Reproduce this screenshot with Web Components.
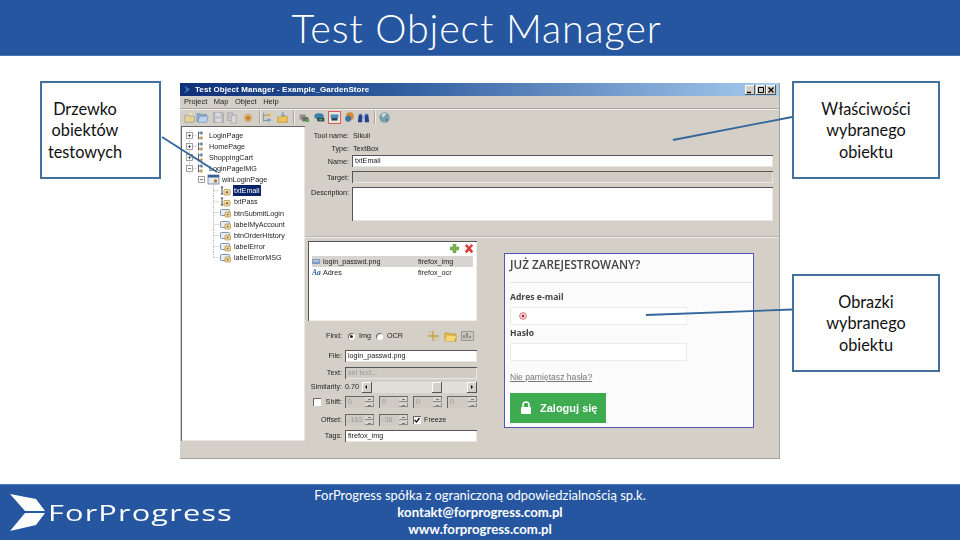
<!DOCTYPE html>
<html lang="pl"><head><meta charset="utf-8"><title>Test Object Manager</title>
<style>html,body{margin:0;padding:0;background:#fff}</style></head>
<body><fp-slide></fp-slide>
<script>
const UI='"Liberation Sans",Arial,sans-serif', SL='Lato,"Open Sans",sans-serif';
function def(name,css,html,init){
  customElements.define(name,class extends HTMLElement{
    connectedCallback(){
      if(this.shadowRoot)return;
      const r=this.attachShadow({mode:'open'});
      r.innerHTML='<style>'+css+'</style>'+(typeof html==='function'?html(this):html);
      if(init)init(this,r);
    }
  });
}
const ICONS={
 newp:'<path d="M1 5h4l1 1h6v7H1z" fill="#e8d48a" stroke="#8a9ab0" stroke-width=".8"/><path d="M7 1l1 2 2-1-1 2 2 1H7z" fill="#f4e9a0"/>',
 open:'<path d="M1 3h4l1 1h6v2H4l-2 6H1z" fill="#8fb2dc" stroke="#6b85a8" stroke-width=".7"/><path d="M4 6h10l-2 7H2z" fill="#bcd2ee" stroke="#6b85a8" stroke-width=".7"/>',
 save:'<path d="M2 2h10l1 1v10H2z" fill="#c2c2c8" stroke="#8e8e98" stroke-width=".8"/><path d="M4 2h6v4H4zM4 9h7v4H4z" fill="#dcdce0"/>',
 copy:'<path d="M2 2h6v9H2z" fill="#c8c8c8" stroke="#999" stroke-width=".7"/><path d="M6 5h6v9H6z" fill="#d8d8d8" stroke="#999" stroke-width=".7"/>',
 gear:'<circle cx="7" cy="8" r="4.4" fill="#dba24e" stroke="#c8b8a0" stroke-width="1.4" stroke-dasharray="2 1"/><circle cx="7" cy="8" r="1.5" fill="#c0563a"/>',
 tree:'<path d="M3 2v10M3 5h5M3 11h5" stroke="#7c8a94" fill="none"/><path d="M7 3h4v3H7z" fill="#e0b040"/><path d="M7 9h4v3H7z" fill="#6aa0d0"/>',
 fold:'<path d="M2 7h4l1-1h6v7H2z" fill="#edc35b" stroke="#b58a2a" stroke-width=".7"/><path d="M8 1v5M6 4l2 2 2-2" stroke="#4d87c7" fill="none"/>',
 blob1:'<path d="M2 4h7v6H2z" fill="#8f8f8f"/><path d="M5 7h7v5H5z" fill="#6b6b6b"/><circle cx="11" cy="11" r="2" fill="#57a04a"/>',
 blob2:'<ellipse cx="7" cy="6" rx="5.5" ry="3.4" fill="#3f7fa5"/><path d="M5 8h8v4H5z" fill="#1f3b52"/><path d="M7 9h4v2H7z" fill="#5cae4e"/>',
 blob3:'<path d="M.5 .5h14v14H.5z" fill="#e9e6e0" stroke="#d63c3c"/><path d="M3 4h9v4H3z" fill="#4c8ab5"/><path d="M4 8h7v3H4z" fill="#25465f"/>',
 blob4:'<circle cx="8" cy="6" r="4.5" fill="#cf8a3c"/><circle cx="6" cy="9" r="3.5" fill="#3d74a4"/>',
 bino:'<path d="M2 4h4v9H1zM9 4h4l1 9H9z" fill="#27408b"/><path d="M6 6h3v3H6z" fill="#8ea6d0"/><path d="M3 3h2v2H3zM10 3h2v2h-2z" fill="#5a78c0"/>',
 globe:'<circle cx="7.5" cy="7.5" r="6" fill="#79a0ab"/><path d="M4 4c2-2 5-2 6 0-2 0-2 3-5 3z" fill="#c7dde0"/><path d="M9 9l3 1-2 3z" fill="#4f7786"/>',
 plus:'<path d="M4 0h4v4h4v4H8v4H4V8H0V4h4z" fill="#7cb34e" stroke="#5c8f36" stroke-width=".6"/>',
 del:'<path d="M1 2l2-2 3 3 3-3 2 2-3 3 3 4-2 2-3-3-3 3-2-2 3-4z" fill="#e03c3c"/>',
 cut:'<path d="M1 6h11M6 1v10" stroke="#caa24a" stroke-width="1.5"/><path d="M2 2h3v3H2zM8 7h3v3H8z" fill="#e9dfc0" stroke="#b8a78a" stroke-width=".6"/>',
 folder2:'<path d="M1 3h4l1 1h6v7H1z" fill="#e7bc4a" stroke="#b88a28" stroke-width=".7"/><path d="M3 6h9l-2 5H1z" fill="#f4d878"/>',
 chart:'<path d="M.5 1.5h12v9H.5z" fill="#c8c6c0" stroke="#9a988f"/><path d="M3 8V5M6 8V3M9 8V6" stroke="#6d6d6d" stroke-width="1.2"/>'
};
const ic=(n,w=15,h=15,vb='0 0 15 15')=>`<svg width="${w}" height="${h}" viewBox="${vb}" style="display:block;flex:none">${ICONS[n]}</svg>`;

def('slide-header',`:host{display:flex;height:56px;background:#25569f;align-items:center;justify-content:center;box-sizing:border-box;border-bottom:1px solid #4a77b4;padding-right:7px}
h1{margin:0;font:300 39.5px/1 ${SL};color:#fff;letter-spacing:.85px}`,'<h1><slot></slot></h1>');

def('call-out',`:host{display:flex;align-items:center;justify-content:center;box-sizing:border-box;height:98px;border:2px solid #41719c;background:#fff;text-align:center;font:400 16.3px/21.6px ${SL};color:#111}`,'<div><slot></slot></div>');

def('fp-logo',`:host{display:flex;align-items:center;gap:2px;color:#fff}
span{font:400 21.5px/1 "Open Sans",sans-serif;letter-spacing:.8px;display:inline-block;transform-origin:left center;transform:scaleX(1.43)}`,
`<svg width="36" height="37" viewBox="0 0 36 37" style="display:block"><path d="M0 0L26 5L35 17H15Z" fill="#fff"/><path d="M15 19H35L26 31L0 37Z" fill="#fff"/></svg><span>ForProgress</span>`);

def('slide-footer',`:host{display:flex;height:56px;background:#25569f;box-sizing:border-box;border-top:1px solid #4f7cb8;position:relative;color:#fff;padding-left:10px;align-items:center}
.t{position:absolute;left:0;right:0;top:2px;text-align:center;font:400 12.95px/17px ${SL}}
b{font-weight:700;font-size:13.2px}`,
`<fp-logo></fp-logo><div class="t"><div>ForProgress spółka z ograniczoną odpowiedzialnością sp.k.</div><div><b>kontakt@forprogress.com.pl</b></div><div><b>www.forprogress.com.pl</b></div></div>`);

def('win-titlebar',`:host{display:flex;align-items:center;height:13px;background:linear-gradient(90deg,#0f2f78 0,#2c5a9c 35%,#a8ccf0 100%);color:#fff;padding-left:4px;padding-right:3px;font:700 8px/13px ${UI};letter-spacing:.08px}
.g{width:6px;height:8px;margin-right:5px;background:#3f76c6;clip-path:polygon(0 0,100% 50%,0 100%,40% 50%)}
.s{flex:1;white-space:nowrap}
.b{display:flex;gap:.5px}
.b i{display:block;width:10px;height:10px;background:#d4d0c8;box-shadow:inset -1px -1px #555,inset 1px 1px #fff;position:relative}
svg{display:block}`,
`<span class="g"></span><span class="s"><slot></slot></span><span class="b">
<i><svg width="10" height="10"><path d="M2 7.500h4" stroke="#000" stroke-width="1.500"/></svg></i>
<i><svg width="10" height="10"><path d="M2.500 2.500h5v5h-5z" fill="none" stroke="#000"/></svg></i>
<i><svg width="10" height="10"><path d="M2.500 2.500l5 5M7.500 2.500l-5 5" stroke="#000" stroke-width="1.300"/></svg></i></span>`);

def('win-menu',`:host{display:flex;box-sizing:border-box;height:13px;align-items:center;padding-left:4px;gap:6.5px;font:400 7.5px/12px ${UI};color:#222;border-bottom:1px solid #aaa79f;box-shadow:0 1px #f2f0ea}`,'<slot></slot>');

def('win-toolbar',`:host{display:flex;height:16px;align-items:center;padding-left:3px;gap:0}
.sl{display:flex;justify-content:center;width:15px;flex:none}
.sp{width:1px;height:14px;background:#a8a59d;box-shadow:1px 0 #f0eee8;flex:none}`,
()=>{
 const it=[['newp',3],['open',-2],['save',1],['copy',-1],['gear',1],0,['tree',0],['fold',0],0,['blob1',3],['blob2',0],['blob3',0],['blob4',0],['bino',0],0,['globe',3]];
 const gaps=[0,-3,1,-1,1,3,0,0,3,3,0,0,0,-1,3,2];
 return it.map((x,i)=>x===0?`<span class="sp" style="margin-left:${gaps[i]}px"></span>`:`<span class="sl" style="margin-left:${gaps[i]}px">${ic(x[0],13,13)}</span>`).join('');
});

def('tree-row',`:host{display:flex;height:11.15px;align-items:center;font:400 7.2px/11px ${UI};color:#222;white-space:nowrap}
svg{display:block;flex:none;overflow:visible}
.t{padding:0 1px;margin-left:0;line-height:11px}
:host([sel]) .t{background:#0a246a;color:#fff}`,
(h)=>{
 const lv=+h.getAttribute('level'),e=h.getAttribute('exp'),ico=h.getAttribute('icon'),last=h.hasAttribute('last');
 const cy=5.6;
 const box=(x,m)=>`<rect x="${x-3}" y="${cy-3}" width="6" height="6" fill="#fff" stroke="#8b8b8b" stroke-width=".8"/><path d="M${x-1.6} ${cy}h3.200${m==='+'?`M${x} ${cy-1.6}v3.200`:''}" stroke="#333" stroke-width=".7"/>`;
 let s='',w=27;
 if(lv===0){
  s+=`<path d="M8.500 0V11.150" stroke="#aaa" stroke-width=".7" stroke-dasharray="1 1"/>`+box(8.5,e)+`<path d="M12 ${cy}h4" stroke="#999" stroke-width=".7" stroke-dasharray="1 1"/>`;
  s+=`<path d="M17.500 1.500v8M17.500 3h3M17.500 8h3" stroke="#555" fill="none" stroke-width=".9"/><rect x="19.500" y="1.500" width="2" height="3" fill="#4a7ca8"/><rect x="19.500" y="6.500" width="2" height="3" fill="#c98f3a"/>`;
 } else if(lv===1){
  w=40;
  s+=box(20.500,'-')+`<rect x="27" y="1" width="11" height="9" fill="#e7ecf4" stroke="#6a7c96" stroke-width=".8"/><rect x="27" y="1" width="11" height="2.500" fill="#3d5f92"/><circle cx="34.500" cy="7" r="1.800" fill="#ad7b33"/>`;
 } else {
  w=52;
  s+=`<path d="M32.500 ${e==='first'?-2:0}V${last?cy:11.150}M32.500 ${cy}h6" stroke="#999" stroke-width=".7" stroke-dasharray="1 1"/>`;
  if(ico==='txt') s+=`<path d="M41 2v7M39.800 2h2.400M39.800 9h2.400" stroke="#222" stroke-width=".8" fill="none"/><rect x="43" y="4.500" width="6" height="5.500" rx="1" fill="#f2e5b8" stroke="#a8822e" stroke-width=".7"/><circle cx="46" cy="7.300" r="1.200" fill="#9a6a1f"/>`;
  else s+=`<rect x="39.500" y="2.500" width="9" height="6" rx="1" fill="#e8eef5" stroke="#617a95" stroke-width=".8"/><rect x="44" y="5" width="5.500" height="5" rx="1" fill="#eeddb0" stroke="#a8822e" stroke-width=".7"/><circle cx="46.700" cy="7.500" r="1" fill="#9a6a1f"/>`;
 }
 return `<svg width="${w}" height="11.150" viewBox="0 0 ${w} 11.150">${s}</svg><span class="t"><slot></slot></span>`;
});

def('tree-panel',`:host{display:block;width:124px;height:315px;margin-left:1px;background:#fff;box-sizing:border-box;padding-top:3.5px;box-shadow:inset 1px 1px #666,inset -1px -1px #e8e6e0}`,
`<tree-row level="0" exp="+">LoginPage</tree-row>
<tree-row level="0" exp="+">HomePage</tree-row>
<tree-row level="0" exp="+">ShoppingCart</tree-row>
<tree-row level="0" exp="-">LoginPageIMG</tree-row>
<tree-row level="1" exp="-">winLoginPage</tree-row>
<tree-row level="2" exp="first" icon="txt" sel>txtEmail</tree-row>
<tree-row level="2" icon="txt">txtPass</tree-row>
<tree-row level="2" icon="btn">btnSubmitLogin</tree-row>
<tree-row level="2" icon="btn">labelMyAccount</tree-row>
<tree-row level="2" icon="btn">btnOrderHistory</tree-row>
<tree-row level="2" icon="btn">labelError</tree-row>
<tree-row level="2" icon="btn" last>labelErrorMSG</tree-row>`);

def('win-input',`:host{display:flex;align-items:center;box-sizing:border-box;height:12px;background:#fff;box-shadow:inset 1px 1px #555,inset -1px -1px #e8e6e0;padding-left:3px;font:400 7.2px/12px ${UI};color:#222;white-space:nowrap;overflow:hidden}
:host([off]){background:#d0ccc4;color:#999}`,'<slot></slot>');

def('prop-grid',`:host{display:grid;grid-template-columns:44px 1fr;column-gap:3px;grid-template-rows:13px 13px 12px 12px 34px;align-content:start;row-gap:0;padding:3px 6px 0 0;font:400 7.2px/13px ${UI};color:#222;height:111px;box-sizing:border-box;border-bottom:1px solid #b8b5ad;box-shadow:0 1px #efede7}
.l{text-align:right;white-space:nowrap}
.v{padding-left:1px}
.a{margin-top:4px}`,
`<div class="l">Tool name:</div><div class="v">Sikuli</div>
<div class="l">Type:</div><div class="v">TextBox</div>
<div class="l">Name:</div><win-input>txtEmail</win-input>
<div class="l a">Target:</div><win-input class="a" off></win-input>
<div class="l" style="margin-top:8px;line-height:11px">Description:</div><win-input style="margin-top:8px;height:34px"></win-input>`);

def('image-list',`:host{display:block;height:80px;background:#fff;box-shadow:inset 1px 1px #555,inset -1px -1px #eee;box-sizing:border-box;font:400 7.2px/11px ${UI};color:#222;padding:0 4px}
.top{display:flex;justify-content:flex-end;height:15px;align-items:center;gap:5px;margin-right:-1px}
.r{display:grid;grid-template-columns:11px 95px 1fr;height:11px;align-items:center;white-space:nowrap}
.r.s{background:#d6d5d2}
.aa{font:italic 700 7.5px/11px "Liberation Serif",serif;color:#2b5aa0}`,
`<div class="top">${ic('plus',9,9,'0 0 12 12')}${ic('del',10,10,'0 0 12 12')}</div>
<div class="r s"><svg width="9" height="6"><rect width="8" height="5" fill="#7f9ac0"/><rect x="1" y="1.500" width="6" height="1" fill="#dfe6f0"/></svg><span>login_passwd.png</span><span>firefox_img</span></div>
<div class="r"><span class="aa">Aa</span><span>Adres</span><span>firefox_ocr</span></div>`);

def('win-radio',`:host{display:inline-block;width:7px;height:7px;border-radius:50%;background:#fff;box-shadow:inset 1px 1px #666;position:relative;flex:none}
:host([on])::after{content:"";position:absolute;left:2px;top:2px;width:3px;height:3px;border-radius:50%;background:#222}`,'');
def('win-check',`:host{display:block;width:8px;height:8px;background:#fff;box-shadow:inset 1px 1px #666;flex:none}svg{display:block}`,
 h=>h.hasAttribute('on')?'<svg width="8" height="8"><path d="M1.500 4l2 2 3-4" fill="none" stroke="#111" stroke-width="1.300"/></svg>':'');
def('win-spin',`:host{display:flex;box-sizing:border-box;width:var(--w,29px);height:12px;background:#cfcbc3;box-shadow:inset 1px 1px #666;color:#999;font:400 7.2px/12px ${UI}}
.v{flex:1;padding-left:3px;white-space:nowrap;overflow:hidden}
.s{width:9px;display:flex;flex-direction:column;gap:1px;padding-top:1px;padding-bottom:1px;box-sizing:border-box}
.s i{flex:1;background:#d9d6cf;box-shadow:inset -1px -1px #8b8b8b;position:relative}
.s i::after{content:"";position:absolute;left:3px;top:2px;width:3px;height:1px;background:#777}`,
`<span class="v"><slot></slot></span><span class="s"><i></i><i></i></span>`);

def('form-row',`:host{display:grid;grid-template-columns:34px 1fr;column-gap:3px;align-items:center;height:12px;font:400 7.2px/12px ${UI};color:#222;white-space:nowrap}
.l{text-align:right}
.c{display:flex;align-items:center;min-width:0}
::slotted(win-input){flex:1}`,
h=>`<div class="l"><slot name="label"></slot></div><div class="c"><slot></slot></div>`);

def('win-scroll',`:host{display:flex;flex:1;height:11px;align-items:stretch;background:repeating-conic-gradient(#e4e2dc 0 25%,#dedbd4 0 50%) 0 0/2px 2px}
i{display:block;background:#d4d0c8;box-shadow:inset -1px -1px #555,inset 1px 1px #fff;flex:none}
.b{width:10px;position:relative}
.b::after{content:"";position:absolute;top:3px;border:2.500px solid transparent}
.a::after{left:1px;border-right-color:#000}
.z::after{left:4px;border-left-color:#000}
.g{flex:0 0 59.500px}.g2{flex:1}.t{width:10.500px}`,
`<i class="b a"></i><span class="g"></span><i class="t"></i><span class="g2"></span><i class="b z"></i>`);

def('image-form',`:host{display:block;margin-top:9px;width:169px}
.in{display:flex;align-items:center}
.ig{margin-left:auto;display:flex;gap:4px;align-items:center;padding-right:3px}
.sh{display:flex;align-items:center;justify-content:flex-end;gap:5px}`,
`<form-row><span slot="label">Find:</span><span class="in" style="flex:1;padding-left:3px"><win-radio on></win-radio><span style="margin:0 5px 0 4px">Img</span><win-radio></win-radio><span style="margin-left:4px">OCR</span>
<span class="ig">${ic('cut',13,12,'0 0 13 12')}${ic('folder2',13,12,'0 0 13 12')}${ic('chart',13,12,'0 0 13 12')}</span></span></form-row>
<form-row style="margin-top:8px"><span slot="label">File:</span><win-input>login_passwd.png</win-input></form-row>
<form-row style="margin-top:5px"><span slot="label">Text:</span><win-input off>set text...</win-input></form-row>
<form-row style="margin-top:2px"><span slot="label">Similarity:</span><span style="width:17px">0.70</span><win-scroll></win-scroll></form-row>
<form-row style="margin-top:3px"><span slot="label" class="sh"><win-check></win-check>Shift:</span><span class="in" style="gap:5px;flex:1"><win-spin>0</win-spin><win-spin>0</win-spin><win-spin>0</win-spin><win-spin style="--w:30px">0</win-spin></span></form-row>
<form-row style="margin-top:6px"><span slot="label">Offset:</span><span class="in" style="gap:5px;flex:1"><win-spin>-163</win-spin><win-spin>-36</win-spin><win-check on></win-check><span style="margin-left:-2px">Freeze</span></span></form-row>
<form-row style="margin-top:4px"><span slot="label">Tags:</span><win-input>firefox_img</win-input></form-row>`);

def('login-preview',`:host{display:block;box-sizing:border-box;width:250px;height:175px;margin-top:12px;border:1px solid #5555b8;background:#fbfbfb;padding:2px 0 0 5px;color:#444;font:700 8.600px/11px "Open Sans",sans-serif;overflow:hidden}
h2{margin:0;font:600 11.700px/16px "Open Sans",sans-serif;color:#444;padding-bottom:9.500px;border-bottom:1px solid #e4e4e4}
.f{height:18px;width:177px;box-sizing:border-box;background:#fff;border:1px solid #ebebeb;display:flex;align-items:center;padding-left:8px}
.l1{margin-top:9px}.l2{margin-top:3px}
a{display:block;margin-top:11px;font:400 8.600px/11px "Liberation Sans",sans-serif;color:#777;text-decoration:underline}
button{display:flex;align-items:center;gap:8px;margin-top:10px;height:30px;width:96px;border:0;background:#3fab51;color:#fff;font:700 11px/30px "Liberation Sans",sans-serif;padding:0 0 0 10px}
svg{display:block}`,
`<h2>JUŻ ZAREJESTROWANY?</h2><div class="l1">Adres e-mail</div>
<div class="f" style="margin-top:4px"><svg width="8" height="8"><circle cx="4" cy="4" r="3.300" fill="#fff" stroke="#c8434f" stroke-width=".8"/><circle cx="4" cy="4" r="1.500" fill="#b5202e"/></svg></div>
<div class="l2">Hasło</div><div class="f" style="margin-top:4px"></div>
<a>Nie pamiętasz hasła?</a>
<button><svg width="12" height="13"><path d="M3 6V4a3 3 0 0 1 6 0v2" fill="none" stroke="#fff" stroke-width="1.600"/><rect x="1" y="6" width="10" height="7" rx="1" fill="#fff"/></svg>Zaloguj się</button>`);

def('prop-panel',`:host{display:block;flex:1;min-width:0}
.lo{display:flex;padding:4px 0 0 3px;gap:27px;align-items:flex-start}`,
`<prop-grid></prop-grid><div class="lo"><div><image-list></image-list><image-form></image-form></div><login-preview></login-preview></div>`);

def('tom-window',`:host{display:block;box-sizing:border-box;width:600px;height:376px;margin-top:2px;background:#d4d0c8;flex:none;border-right:1px solid #a5a29b;border-bottom:1px solid #a5a29b;filter:blur(.3px)}
.m{display:flex;margin-top:1px}`,
`<win-titlebar>Test Object Manager - Example_GardenStore</win-titlebar>
<win-menu><span>Project</span><span>Map</span><span>Object</span><span>Help</span></win-menu>
<win-toolbar></win-toolbar>
<div class="m"><tree-panel></tree-panel><prop-panel></prop-panel></div>`);

def('fp-slide',`:host{display:flex;flex-direction:column;width:960px;height:540px;position:relative;overflow:hidden;background:#fff}
main{flex:1;display:flex;align-items:flex-start;padding:25px 0 0 40px;box-sizing:border-box}
.lc{width:121px;flex:none;margin-right:19px;padding-right:31px}
.rc{display:flex;flex-direction:column;gap:95px;width:148px;margin-left:12px;flex:none}
svg{position:absolute;left:0;top:0;pointer-events:none}`,
`<slide-header>Test Object Manager</slide-header>
<main><call-out class="lc">Drzewko<br>obiektów<br>testowych</call-out>
<tom-window></tom-window>
<div class="rc"><call-out>Właściwości<br>wybranego<br>obiektu</call-out><call-out>Obrazki<br>wybranego<br>obiektu</call-out></div></main>
<slide-footer></slide-footer>
<svg width="960" height="540"><g stroke="#336699" stroke-width="1.800" fill="none"><path d="M162 137L217 172"/><path d="M792 117L673 140"/><path d="M792 309.500L646 315"/></g></svg>`);
</script></body></html>
